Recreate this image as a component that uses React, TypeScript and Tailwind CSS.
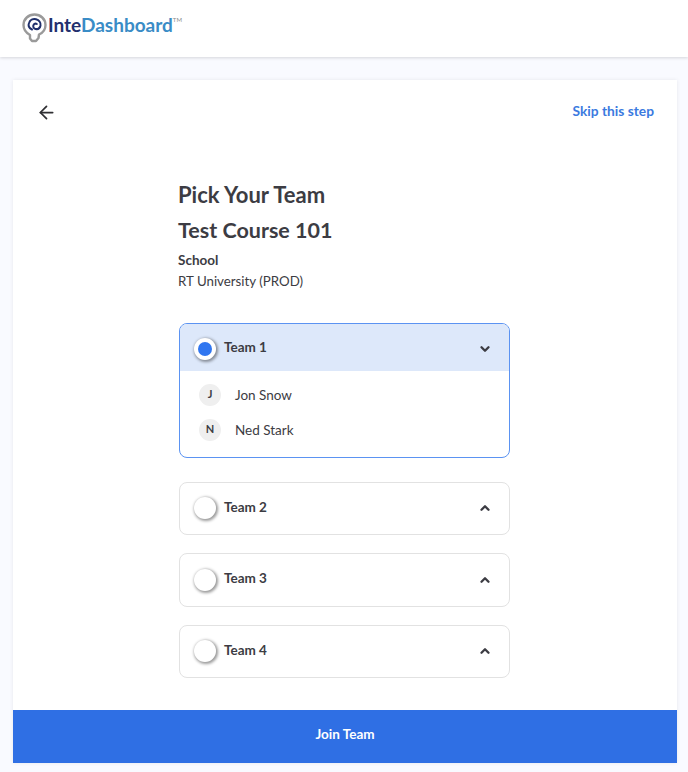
import { ArrowLeft, ChevronDown, ChevronUp } from 'lucide-react';

function Logo() {
  return (
    <div className="mt-[-8px] flex items-center">
      <svg width="25" height="30" viewBox="0 0 25 30" fill="none" className="mt-[6px] shrink-0">
        {/* bulb */}
        <path
          d="M8 25.5 V22 C3.5 19.5 1.5 16 1.5 12 C1.5 6 6.5 1.5 12.5 1.5 C18.5 1.5 23.5 6 23.5 12 C23.5 16 21.5 19.5 17 21.5 L16.5 25 L14 28 H10 Z"
          stroke="#9a9a9a"
          strokeWidth="2.4"
          strokeLinejoin="round"
        />
        {/* swirl */}
        <path
          d="M10 16.5 C7 15 6 12.5 7 10 C8 7 11 5.5 14 6.2 C17 7 19 9.5 18.5 12.5 C18 15 16 16.5 13.5 16 C11.5 15.5 10.8 13.5 11.5 12 C12 10.8 13.5 10.2 14.8 11"
          stroke="#1f2f6b"
          strokeWidth="2"
          strokeLinecap="round"
        />
      </svg>
      <span className="ml-[1px] text-[19px] font-bold leading-none">
        <span className="text-[#22306e]">Inte</span>
        <span className="text-[#3a8cc6]">Dashboard</span>
      </span>
      <span className="mb-[10px] text-[6px] leading-none text-[#8a8a8a]">TM</span>
    </div>
  );
}

function Radio({ checked }: { checked?: boolean }) {
  return (
    <span className="flex h-[22px] w-[22px] items-center justify-center rounded-full bg-white shadow-[1px_1px_3px_1px_rgba(0,0,0,0.4)]">
      {checked && <span className="h-[14px] w-[14px] rounded-full bg-[#3076f0]" />}
    </span>
  );
}

function Member({ initial, name }: { initial: string; name: string }) {
  return (
    <div className="flex items-center">
      <span className="flex h-[22px] w-[22px] items-center justify-center rounded-full bg-[#efefef] text-[11px] font-bold text-[#3c3c43]">
        {initial}
      </span>
      <span className="ml-[14px] text-[13.5px] text-[#3c3c43]">{name}</span>
    </div>
  );
}

function TeamRow({ name }: { name: string }) {
  return (
    <div className="flex h-[53.5px] items-center rounded-lg border border-[#e2e2e2] bg-white pl-[14px] pr-[17px]">
      <Radio />
      <span className="mb-[3px] ml-[8px] flex-1 text-[13.5px] font-bold text-[#3c3c43]">{name}</span>
      <ChevronUp size={14} strokeWidth={4} className="text-[#3c3c43]" />
    </div>
  );
}

export default function App() {
  return (
    <div
      className="flex h-[772px] flex-col overflow-hidden bg-[#f9faff] text-[#3c3c43]"
      style={{ fontFamily: 'Lato, "Noto Sans", sans-serif' }}
    >
      <header className="flex h-[57px] items-center bg-white pl-[22px] shadow-[0_1px_3px_rgba(0,0,0,0.15)]">
        <Logo />
      </header>

      <main className="ml-[13px] mr-[11px] mt-[23px] flex h-[683px] flex-col bg-white shadow-[0_0_4px_rgba(0,0,0,0.08)]">
        <div className="flex items-center justify-between pl-[23px] pr-[23px] pt-[21px]">
          <ArrowLeft size={21} strokeWidth={2} className="text-[#2f2f33]" />
          <span className="mb-[2px] text-[13.75px] font-bold text-[#3b7ae0]">Skip this step</span>
        </div>

        <div className="ml-[166px] mt-[57px] flex w-[331px] flex-1 flex-col">
          <div className="ml-[-1px]">
            <h1 className="text-[22px] font-bold leading-[28px]">Pick Your Team</h1>
            <h2 className="mt-[7px] text-[21.5px] font-bold leading-[28px]">Test Course 101</h2>
            <p className="mt-[6px] text-[13.5px] font-bold leading-[20px]">School</p>
            <p className="mt-[1px] text-[13.3px] leading-[20px]">RT University (PROD)</p>
          </div>

          <div className="mt-[32px] overflow-hidden rounded-lg border border-[#5b93f2]">
            <div className="flex h-[47px] items-center bg-[#dde8fa] pl-[14px] pr-[17px] pt-[3px]">
              <Radio checked />
              <span className="mb-[3px] ml-[8px] flex-1 text-[13.5px] font-bold">Team 1</span>
              <ChevronDown size={14} strokeWidth={4} />
            </div>
            <div className="flex flex-col gap-[13px] pb-[16px] pl-[19px] pt-[13px]">
              <Member initial="J" name="Jon Snow" />
              <Member initial="N" name="Ned Stark" />
            </div>
          </div>

          <div className="mt-[24px] flex flex-col gap-[18px]">
            <TeamRow name="Team 2" />
            <TeamRow name="Team 3" />
            <TeamRow name="Team 4" />
          </div>
        </div>

        <button className="h-[53px] w-full bg-[#2f6fe4] pb-[5px] text-[13.5px] font-bold text-white">Join Team</button>
      </main>
    </div>
  );
}
